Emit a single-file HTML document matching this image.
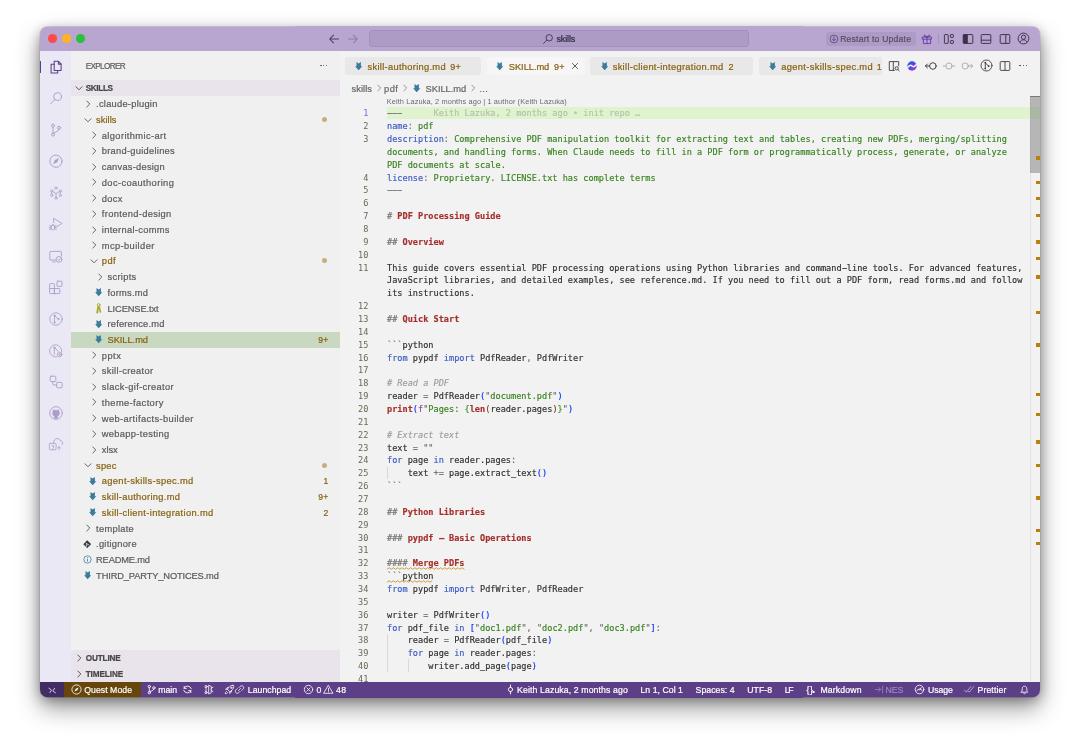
<!DOCTYPE html>
<html lang="en"><head><meta charset="utf-8"><title>SKILL.md — skills</title>
<style>
html,body{margin:0;padding:0;background:#fff;}
body{width:1080px;height:751px;position:relative;overflow:hidden;font-family:'Liberation Sans','DejaVu Sans',sans-serif;}
.b{position:absolute;display:block;}
.t{position:absolute;white-space:pre;line-height:14px;height:14px;-webkit-text-stroke:0.2px;}
#shadow{position:absolute;left:40px;top:26.5px;width:1000px;height:670.8px;border-radius:7.5px;
  box-shadow:0 11px 24px rgba(0,0,0,0.40), 0 3px 12px rgba(0,0,0,0.30), 0 0 1px rgba(0,0,0,0.5);background:#f2f2f2;}
#win{will-change:transform;position:absolute;left:0;top:0;width:1080px;height:751px;clip-path:inset(26.5px 40px 53.7px 40px round 7.5px);}
.cl{position:absolute;left:387px;white-space:pre;font-family:'DejaVu Sans Mono','Liberation Mono',monospace;font-size:8.57px;line-height:12.857px;height:12.857px;color:#2e2e2e;-webkit-text-stroke:0.15px;letter-spacing:0.011px;}
.ln{position:absolute;width:30px;left:338.4px;text-align:right;font-family:'DejaVu Sans Mono','Liberation Mono',monospace;font-size:8.57px;line-height:12.857px;height:12.857px;color:#666955;}
.k{color:#3a59c3} .s{color:#38821f} .c{color:#9c9c9c;font-style:italic} .h{color:#a52f2b;font-weight:bold}
.p{color:#6e6e6e} .b1{color:#0431fa} .b2{color:#319331} .b3{color:#7b3814} .v{color:#7a3e9d}
.hy{display:inline-block;transform:scaleX(1.9);}
.sq{text-decoration:underline wavy #bf8803;text-decoration-thickness:0.7px;text-underline-offset:1.5px;}
</style></head><body>
<div id="shadow"></div>
<div id="win">
<div class="b" style="left:40.00px;top:26.00px;width:1000.00px;height:25.20px;background:#b8a6d0;"></div>
<div class="b" style="left:40.00px;top:51.20px;width:31.40px;height:631.00px;background:#eae8f4;"></div>
<div class="b" style="left:71.40px;top:51.20px;width:268.40px;height:631.00px;background:#f0f0f0;"></div>
<div class="b" style="left:339.80px;top:51.20px;width:700.20px;height:631.00px;background:#f2f2f2;"></div>
<div class="b" style="left:40.00px;top:681.75px;width:1000.00px;height:16.00px;background:#5c3f87;"></div>
<div class="b" style="left:47.85px;top:34.25px;width:8.70px;height:8.70px;background:#fe4a4a;border-radius:50%;"></div>
<div class="b" style="left:62.15px;top:34.25px;width:8.70px;height:8.70px;background:#feb224;border-radius:50%;"></div>
<div class="b" style="left:76.45px;top:34.25px;width:8.70px;height:8.70px;background:#27c13b;border-radius:50%;"></div>
<svg class="b" style="left:328.00px;top:33.00px;" width="12" height="12" viewBox="0 0 12 12"><path d="M10.5 6H2M5.5 2.2L1.7 6l3.8 3.8" fill="none" stroke="#4a3d5c" stroke-width="1.05" stroke-linecap="round" stroke-linejoin="round"/></svg>
<svg class="b" style="left:347.00px;top:33.00px;" width="12" height="12" viewBox="0 0 12 12"><path d="M1.5 6H10M6.5 2.2L10.3 6l-3.8 3.8" fill="none" stroke="#8c7ca5" stroke-width="1.05" stroke-linecap="round" stroke-linejoin="round"/></svg>
<div class="b" style="left:368.60px;top:30.30px;width:380.00px;height:17.20px;background:#ad9bc6;border-radius:4px;box-shadow:inset 0 0 0 0.7px #9f8cba;"></div>
<svg class="b" style="left:542.00px;top:33.00px;" width="12" height="12" viewBox="0 0 12 12"><circle cx="7.2" cy="4.8" r="3.2" fill="none" stroke="#3f3550" stroke-width="0.9"/><path d="M4.9 7.1L1.6 10.4" stroke="#3f3550" stroke-width="0.9" stroke-linecap="round"/></svg>
<div class="t" style="top:31.90px;font-size:9px;color:#2e2740;letter-spacing:-0.140px;left:556.50px;">skills</div>
<div class="b" style="left:826.10px;top:32.00px;width:89.60px;height:14.00px;background:#ad9bc6;border-radius:3px;"></div>
<svg class="b" style="left:829.00px;top:33.90px;" width="10" height="10" viewBox="0 0 10 10"><circle cx="5" cy="5" r="3.9" fill="none" stroke="#5a3f85" stroke-width="0.8"/><path d="M5 2.9v3.6M3.4 5.2L5 6.8l1.6-1.6" fill="none" stroke="#5a3f85" stroke-width="0.8" stroke-linecap="round" stroke-linejoin="round"/></svg>
<div class="t" style="top:31.90px;font-size:8.6px;color:#564c66;letter-spacing:0.215px;left:840.20px;">Restart to Update</div>
<div class="b" style="left:40.00px;top:61.30px;width:1.35px;height:12.20px;background:#5c3f87;"></div>
<svg class="b" style="left:47.80px;top:59.00px;" width="16" height="16" viewBox="0 0 16 16"><g fill="none" stroke="#5c3f87" stroke-width="1.05" stroke-linecap="round" stroke-linejoin="round"><path d="M6.2 2.3h4.3l2.6 2.6v6.6h-6.9z"/><path d="M10.4 2.4v2.7h2.6"/><path d="M6.2 5.2H3.1v8.7h6.6v-2.3"/></g></svg>
<svg class="b" style="left:47.80px;top:90.43px;" width="16" height="16" viewBox="0 0 16 16"><g fill="none" stroke="#ad9dc9" stroke-width="0.95" stroke-linecap="round" stroke-linejoin="round"><circle cx="9.6" cy="6.6" r="3.9"/><path d="M6.8 9.5L2.6 13.9"/></g></svg>
<svg class="b" style="left:47.80px;top:121.86px;" width="16" height="16" viewBox="0 0 16 16"><g fill="none" stroke="#ad9dc9" stroke-width="0.95" stroke-linecap="round" stroke-linejoin="round"><circle cx="5" cy="3.6" r="1.5"/><circle cx="5" cy="12.6" r="1.5"/><circle cx="11" cy="5.8" r="1.5"/><path d="M5 5.1v6M11 7.3c0 2.4-3.2 2.2-5.6 4"/></g></svg>
<svg class="b" style="left:47.80px;top:153.29px;" width="16" height="16" viewBox="0 0 16 16"><g fill="none" stroke="#ad9dc9" stroke-width="0.95" stroke-linecap="round" stroke-linejoin="round"><circle cx="8" cy="8.2" r="6.1"/><path d="M10.6 5.6L9 9.2 5.4 10.8 7 7.2z" fill="#ad9dc9" stroke-width="0.4"/></g></svg>
<svg class="b" style="left:47.80px;top:184.72px;" width="16" height="16" viewBox="0 0 16 16"><g fill="none" stroke="#ad9dc9" stroke-width="0.8" stroke-linecap="round" stroke-linejoin="round"><circle cx="7.900" cy="3.100" r="1.150"/><circle cx="8" cy="13.100" r="1.150"/><circle cx="3.700" cy="6.100" r="1.150"/><circle cx="12.300" cy="6.100" r="1.150"/><circle cx="3.700" cy="10.400" r="1.150"/><circle cx="12.300" cy="10.400" r="1.150"/><path d="M4.700 6.700L8 8.600L11.300 6.700M8 8.600v3.300M3.700 7.300v1.900M12.300 7.300v1.900"/></g></svg>
<svg class="b" style="left:47.80px;top:216.15px;" width="16" height="16" viewBox="0 0 16 16"><g fill="none" stroke="#ad9dc9" stroke-width="0.85" stroke-linecap="round" stroke-linejoin="round"><path d="M5.600 6.400V2.300l8.500 5.100-4.700 2.900"/><ellipse cx="4.900" cy="11.500" rx="2" ry="2.500"/><path d="M1.500 9.600l1.600.900M1.500 13.600l1.600-.9M8.300 9.600l-1.600.900M8.300 13.600l-1.600-.9M1.200 11.600h1.700M6.900 11.600h1.700M3.600 9.300c.4-.9 2.200-.9 2.600 0"/></g></svg>
<svg class="b" style="left:47.80px;top:247.58px;" width="16" height="16" viewBox="0 0 16 16"><g fill="none" stroke="#ad9dc9" stroke-width="0.9" stroke-linecap="round" stroke-linejoin="round"><path d="M8 12H2.600c-.5 0-.8-.3-.8-.8V4.200c0-.5.300-.8.800-.8h10c.5 0 .8.300.8.800v4"/><path d="M4.600 13.900h2.600"/><circle cx="11" cy="11.400" r="2.900"/><path d="M9.800 11.500l.9.900 1.500-1.800"/></g></svg>
<svg class="b" style="left:47.80px;top:279.01px;" width="16" height="16" viewBox="0 0 16 16"><g fill="none" stroke="#ad9dc9" stroke-width="0.9" stroke-linecap="round" stroke-linejoin="round"><path d="M1.600 5.400c0-.5.300-.8.800-.8h3.200c.5 0 .8.300.8.800v9.200h-4c-.5 0-.8-.3-.8-.8zM1.600 9.500h9.400c.5 0 .8.300.8.800v3.500c0 .5-.3.800-.8.800H6.400M6.400 9.500v5.100"/><rect x="9" y="2.200" width="5" height="5.200" rx="0.800"/></g></svg>
<svg class="b" style="left:47.80px;top:311.34px;" width="16" height="16" viewBox="0 0 16 16"><g fill="none" stroke="#ad9dc9" stroke-width="0.85" stroke-linecap="round" stroke-linejoin="round"><circle cx="8" cy="8" r="6.200"/><circle cx="6.500" cy="4.700" r="0.700"/><circle cx="6.500" cy="11.400" r="0.700"/><circle cx="10.300" cy="8" r="0.700"/><path d="M6.500 5.400v5.300M7 5.200l2.900 2.400"/></g></svg>
<svg class="b" style="left:47.80px;top:342.77px;" width="16" height="16" viewBox="0 0 16 16"><g fill="none" stroke="#ad9dc9" stroke-width="0.85" stroke-linecap="round" stroke-linejoin="round"><path d="M13.600 9.200A6.100 6.100 0 1 0 8.600 13.900"/><circle cx="6.300" cy="4.600" r="0.700"/><path d="M6.300 5.300v6M6.800 5l3.600 3.400"/><circle cx="11.600" cy="11.600" r="2.300"/><circle cx="11.600" cy="11.600" r="0.800"/></g></svg>
<svg class="b" style="left:47.80px;top:374.00px;" width="16" height="16" viewBox="0 0 16 16"><g fill="none" stroke="#ad9dc9" stroke-width="0.9" stroke-linecap="round" stroke-linejoin="round"><rect x="2.200" y="2.200" width="5.600" height="5.400" rx="0.900"/><rect x="8.600" y="8.400" width="5.600" height="5.400" rx="0.900"/><path d="M4.700 7.600v2c0 .9.500 1.400 1.400 1.400h2.500"/></g></svg>
<svg class="b" style="left:47.80px;top:405.13px;" width="16" height="16" viewBox="0 0 16 16"><g fill="none" stroke="#ad9dc9" stroke-width="0.9" stroke-linecap="round" stroke-linejoin="round"><circle cx="8" cy="8" r="6.300"/><path d="M6.400 13.200v-2.100c-.9-.3-1.900-1.300-1.900-2.800 0-.7.200-1.300.6-1.800-.1-.5-.1-1.100.1-1.700.7 0 1.300.3 1.800.7.600-.2 1.400-.2 2 0 .5-.4 1.100-.7 1.800-.7.200.6.200 1.200.1 1.700.4.500.6 1.100.6 1.800 0 1.500-1 2.500-1.900 2.800v2.100z" fill="#ad9dc9" stroke-width="0.5"/></g></svg>
<svg class="b" style="left:47.80px;top:436.16px;" width="16" height="16" viewBox="0 0 16 16"><g fill="none" stroke="#ad9dc9" stroke-width="0.85" stroke-linecap="round" stroke-linejoin="round"><path d="M5.600 7.100c-.3-2.600 1.300-4.500 3.600-4.500 1.600 0 2.800.9 3.300 2.300 1.300.1 2.200 1 2.200 2.200 0 .8-.4 1.400-1 1.800"/><rect x="1.300" y="7.300" width="6.800" height="6.500" rx="1.100"/><path d="M4.200 9.600h1.300v1.900c0 .5-.3.800-.8.800M11 13.600v-2.800M9.700 12l1.300-1.300 1.300 1.300"/></g></svg>
<div class="t" style="top:60.00px;font-size:8.2px;color:#5f5f5f;letter-spacing:-0.656px;left:85.70px;">EXPLORER</div>
<div class="b" style="left:320.30px;top:65.20px;width:1.30px;height:1.30px;background:#555;border-radius:50%;"></div>
<div class="b" style="left:323.20px;top:65.20px;width:1.30px;height:1.30px;background:#555;border-radius:50%;"></div>
<div class="b" style="left:326.10px;top:65.20px;width:1.30px;height:1.30px;background:#555;border-radius:50%;"></div>
<div class="b" style="left:71.40px;top:80.20px;width:268.40px;height:15.50px;background:#e9e4ec;"></div>
<svg class="b" style="left:73.60px;top:83.20px;" width="10" height="10" viewBox="0 0 10 10"><path d="M2.0 3.8L5 6.8L8.0 3.8" fill="none" stroke="#444" stroke-width="0.9" stroke-linecap="round" stroke-linejoin="round"/></svg>
<div class="t" style="top:82.00px;font-size:8.2px;color:#474747;font-weight:bold;letter-spacing:-0.365px;left:85.70px;">SKILLS</div>
<svg class="b" style="left:83.30px;top:98.86px;" width="10" height="10" viewBox="0 0 10 10"><path d="M3.8 2.0L6.8 5L3.8 8.0" fill="none" stroke="#555" stroke-width="0.9" stroke-linecap="round" stroke-linejoin="round"/></svg>
<div class="t" style="top:97.31px;font-size:9.3px;color:#5a5a5a;letter-spacing:0.255px;left:96.10px;">.claude-plugin</div>
<svg class="b" style="left:83.30px;top:114.57px;" width="10" height="10" viewBox="0 0 10 10"><path d="M2.0 3.8L5 6.8L8.0 3.8" fill="none" stroke="#555" stroke-width="0.9" stroke-linecap="round" stroke-linejoin="round"/></svg>
<div class="t" style="top:113.02px;font-size:9.3px;color:#87610f;letter-spacing:0.049px;left:96.10px;">skills</div>
<div class="b" style="left:322.30px;top:116.97px;width:5.00px;height:5.00px;background:#c6ad7f;border-radius:50%;"></div>
<svg class="b" style="left:89.01px;top:130.29px;" width="10" height="10" viewBox="0 0 10 10"><path d="M3.8 2.0L6.8 5L3.8 8.0" fill="none" stroke="#555" stroke-width="0.9" stroke-linecap="round" stroke-linejoin="round"/></svg>
<div class="t" style="top:128.74px;font-size:9.3px;color:#5a5a5a;letter-spacing:0.385px;left:101.81px;">algorithmic-art</div>
<svg class="b" style="left:89.01px;top:146.00px;" width="10" height="10" viewBox="0 0 10 10"><path d="M3.8 2.0L6.8 5L3.8 8.0" fill="none" stroke="#555" stroke-width="0.9" stroke-linecap="round" stroke-linejoin="round"/></svg>
<div class="t" style="top:144.45px;font-size:9.3px;color:#5a5a5a;letter-spacing:0.277px;left:101.81px;">brand-guidelines</div>
<svg class="b" style="left:89.01px;top:161.71px;" width="10" height="10" viewBox="0 0 10 10"><path d="M3.8 2.0L6.8 5L3.8 8.0" fill="none" stroke="#555" stroke-width="0.9" stroke-linecap="round" stroke-linejoin="round"/></svg>
<div class="t" style="top:160.16px;font-size:9.3px;color:#5a5a5a;letter-spacing:0.246px;left:101.81px;">canvas-design</div>
<svg class="b" style="left:89.01px;top:177.43px;" width="10" height="10" viewBox="0 0 10 10"><path d="M3.8 2.0L6.8 5L3.8 8.0" fill="none" stroke="#555" stroke-width="0.9" stroke-linecap="round" stroke-linejoin="round"/></svg>
<div class="t" style="top:175.88px;font-size:9.3px;color:#5a5a5a;letter-spacing:0.381px;left:101.81px;">doc-coauthoring</div>
<svg class="b" style="left:89.01px;top:193.14px;" width="10" height="10" viewBox="0 0 10 10"><path d="M3.8 2.0L6.8 5L3.8 8.0" fill="none" stroke="#555" stroke-width="0.9" stroke-linecap="round" stroke-linejoin="round"/></svg>
<div class="t" style="top:191.59px;font-size:9.3px;color:#5a5a5a;letter-spacing:0.353px;left:101.81px;">docx</div>
<svg class="b" style="left:89.01px;top:208.86px;" width="10" height="10" viewBox="0 0 10 10"><path d="M3.8 2.0L6.8 5L3.8 8.0" fill="none" stroke="#555" stroke-width="0.9" stroke-linecap="round" stroke-linejoin="round"/></svg>
<div class="t" style="top:207.31px;font-size:9.3px;color:#5a5a5a;letter-spacing:0.349px;left:101.81px;">frontend-design</div>
<svg class="b" style="left:89.01px;top:224.57px;" width="10" height="10" viewBox="0 0 10 10"><path d="M3.8 2.0L6.8 5L3.8 8.0" fill="none" stroke="#555" stroke-width="0.9" stroke-linecap="round" stroke-linejoin="round"/></svg>
<div class="t" style="top:223.02px;font-size:9.3px;color:#5a5a5a;letter-spacing:0.319px;left:101.81px;">internal-comms</div>
<svg class="b" style="left:89.01px;top:240.28px;" width="10" height="10" viewBox="0 0 10 10"><path d="M3.8 2.0L6.8 5L3.8 8.0" fill="none" stroke="#555" stroke-width="0.9" stroke-linecap="round" stroke-linejoin="round"/></svg>
<div class="t" style="top:238.73px;font-size:9.3px;color:#5a5a5a;letter-spacing:0.392px;left:101.81px;">mcp-builder</div>
<svg class="b" style="left:89.01px;top:256.00px;" width="10" height="10" viewBox="0 0 10 10"><path d="M2.0 3.8L5 6.8L8.0 3.8" fill="none" stroke="#555" stroke-width="0.9" stroke-linecap="round" stroke-linejoin="round"/></svg>
<div class="t" style="top:254.45px;font-size:9.3px;color:#87610f;letter-spacing:0.431px;left:101.81px;">pdf</div>
<div class="b" style="left:322.30px;top:258.40px;width:5.00px;height:5.00px;background:#c6ad7f;border-radius:50%;"></div>
<svg class="b" style="left:94.73px;top:271.71px;" width="10" height="10" viewBox="0 0 10 10"><path d="M3.8 2.0L6.8 5L3.8 8.0" fill="none" stroke="#555" stroke-width="0.9" stroke-linecap="round" stroke-linejoin="round"/></svg>
<div class="t" style="top:270.16px;font-size:9.3px;color:#5a5a5a;letter-spacing:0.304px;left:107.53px;">scripts</div>
<svg class="b" style="left:95.03px;top:288.13px;" width="7.6" height="8.6" viewBox="0 0 7.6 8.6"><path d="M1.500 0.100L3.700 1.400 5.900 0.100V4.200H7.300L3.700 8.300 0.100 4.200H1.500z" fill="#3b7b9d"/></svg>
<div class="t" style="top:285.88px;font-size:9.3px;color:#5a5a5a;letter-spacing:0.250px;left:107.53px;">forms.md</div>
<svg class="b" style="left:95.03px;top:302.84px;" width="7.6" height="10.8" viewBox="0 0 7.6 10.8"><g fill="none" stroke="#a8a72a" stroke-linecap="round"><circle cx="3.700" cy="1.900" r="1.350" stroke-width="0.9"/><path d="M3.200 3.900L2.300 9.600" stroke-width="1.900"/><path d="M4.300 4L5.500 9" stroke-width="1.500"/></g></svg>
<div class="t" style="top:301.59px;font-size:9.3px;color:#5a5a5a;letter-spacing:-0.119px;left:107.53px;">LICENSE.txt</div>
<svg class="b" style="left:95.03px;top:319.55px;" width="7.6" height="8.6" viewBox="0 0 7.6 8.6"><path d="M1.500 0.100L3.700 1.400 5.900 0.100V4.200H7.300L3.700 8.300 0.100 4.200H1.500z" fill="#3b7b9d"/></svg>
<div class="t" style="top:317.30px;font-size:9.3px;color:#5a5a5a;letter-spacing:0.184px;left:107.53px;">reference.md</div>
<div class="b" style="left:71.40px;top:332.01px;width:268.40px;height:15.71px;background:#c9d8c1;"></div>
<svg class="b" style="left:95.03px;top:335.27px;" width="7.6" height="8.6" viewBox="0 0 7.6 8.6"><path d="M1.500 0.100L3.700 1.400 5.900 0.100V4.200H7.300L3.700 8.300 0.100 4.200H1.500z" fill="#3b7b9d"/></svg>
<div class="t" style="top:333.02px;font-size:9.3px;color:#87610f;letter-spacing:-0.047px;left:107.53px;">SKILL.md</div>
<div class="t" style="top:333.07px;font-size:8.6px;color:#87610f;letter-spacing:0.200px;right:751.60px;">9+</div>
<svg class="b" style="left:89.01px;top:350.28px;" width="10" height="10" viewBox="0 0 10 10"><path d="M3.8 2.0L6.8 5L3.8 8.0" fill="none" stroke="#555" stroke-width="0.9" stroke-linecap="round" stroke-linejoin="round"/></svg>
<div class="t" style="top:348.73px;font-size:9.3px;color:#5a5a5a;letter-spacing:0.474px;left:101.81px;">pptx</div>
<svg class="b" style="left:89.01px;top:366.00px;" width="10" height="10" viewBox="0 0 10 10"><path d="M3.8 2.0L6.8 5L3.8 8.0" fill="none" stroke="#555" stroke-width="0.9" stroke-linecap="round" stroke-linejoin="round"/></svg>
<div class="t" style="top:364.45px;font-size:9.3px;color:#5a5a5a;letter-spacing:0.306px;left:101.81px;">skill-creator</div>
<svg class="b" style="left:89.01px;top:381.71px;" width="10" height="10" viewBox="0 0 10 10"><path d="M3.8 2.0L6.8 5L3.8 8.0" fill="none" stroke="#555" stroke-width="0.9" stroke-linecap="round" stroke-linejoin="round"/></svg>
<div class="t" style="top:380.16px;font-size:9.3px;color:#5a5a5a;letter-spacing:0.354px;left:101.81px;">slack-gif-creator</div>
<svg class="b" style="left:89.01px;top:397.42px;" width="10" height="10" viewBox="0 0 10 10"><path d="M3.8 2.0L6.8 5L3.8 8.0" fill="none" stroke="#555" stroke-width="0.9" stroke-linecap="round" stroke-linejoin="round"/></svg>
<div class="t" style="top:395.87px;font-size:9.3px;color:#5a5a5a;letter-spacing:0.388px;left:101.81px;">theme-factory</div>
<svg class="b" style="left:89.01px;top:413.14px;" width="10" height="10" viewBox="0 0 10 10"><path d="M3.8 2.0L6.8 5L3.8 8.0" fill="none" stroke="#555" stroke-width="0.9" stroke-linecap="round" stroke-linejoin="round"/></svg>
<div class="t" style="top:411.59px;font-size:9.3px;color:#5a5a5a;letter-spacing:0.389px;left:101.81px;">web-artifacts-builder</div>
<svg class="b" style="left:89.01px;top:428.85px;" width="10" height="10" viewBox="0 0 10 10"><path d="M3.8 2.0L6.8 5L3.8 8.0" fill="none" stroke="#555" stroke-width="0.9" stroke-linecap="round" stroke-linejoin="round"/></svg>
<div class="t" style="top:427.30px;font-size:9.3px;color:#5a5a5a;letter-spacing:0.334px;left:101.81px;">webapp-testing</div>
<svg class="b" style="left:89.01px;top:444.57px;" width="10" height="10" viewBox="0 0 10 10"><path d="M3.8 2.0L6.8 5L3.8 8.0" fill="none" stroke="#555" stroke-width="0.9" stroke-linecap="round" stroke-linejoin="round"/></svg>
<div class="t" style="top:443.02px;font-size:9.3px;color:#5a5a5a;letter-spacing:-0.039px;left:101.81px;">xlsx</div>
<svg class="b" style="left:83.30px;top:460.28px;" width="10" height="10" viewBox="0 0 10 10"><path d="M2.0 3.8L5 6.8L8.0 3.8" fill="none" stroke="#555" stroke-width="0.9" stroke-linecap="round" stroke-linejoin="round"/></svg>
<div class="t" style="top:458.73px;font-size:9.3px;color:#87610f;letter-spacing:0.220px;left:96.10px;">spec</div>
<div class="b" style="left:322.30px;top:462.68px;width:5.00px;height:5.00px;background:#c6ad7f;border-radius:50%;"></div>
<svg class="b" style="left:89.31px;top:476.69px;" width="7.6" height="8.6" viewBox="0 0 7.6 8.6"><path d="M1.500 0.100L3.700 1.400 5.900 0.100V4.200H7.300L3.700 8.300 0.100 4.200H1.500z" fill="#3b7b9d"/></svg>
<div class="t" style="top:474.44px;font-size:9.3px;color:#87610f;letter-spacing:0.351px;left:101.81px;">agent-skills-spec.md</div>
<div class="t" style="top:474.49px;font-size:8.6px;color:#87610f;letter-spacing:0.200px;right:751.60px;">1</div>
<svg class="b" style="left:89.31px;top:492.41px;" width="7.6" height="8.6" viewBox="0 0 7.6 8.6"><path d="M1.500 0.100L3.700 1.400 5.900 0.100V4.200H7.300L3.700 8.300 0.100 4.200H1.500z" fill="#3b7b9d"/></svg>
<div class="t" style="top:490.16px;font-size:9.3px;color:#87610f;letter-spacing:0.308px;left:101.81px;">skill-authoring.md</div>
<div class="t" style="top:490.21px;font-size:8.6px;color:#87610f;letter-spacing:0.200px;right:751.60px;">9+</div>
<svg class="b" style="left:89.31px;top:508.12px;" width="7.6" height="8.6" viewBox="0 0 7.6 8.6"><path d="M1.500 0.100L3.700 1.400 5.900 0.100V4.200H7.300L3.700 8.300 0.100 4.200H1.500z" fill="#3b7b9d"/></svg>
<div class="t" style="top:505.87px;font-size:9.3px;color:#87610f;letter-spacing:0.350px;left:101.81px;">skill-client-integration.md</div>
<div class="t" style="top:505.92px;font-size:8.6px;color:#87610f;letter-spacing:0.200px;right:751.60px;">2</div>
<svg class="b" style="left:83.30px;top:523.13px;" width="10" height="10" viewBox="0 0 10 10"><path d="M3.8 2.0L6.8 5L3.8 8.0" fill="none" stroke="#555" stroke-width="0.9" stroke-linecap="round" stroke-linejoin="round"/></svg>
<div class="t" style="top:521.59px;font-size:9.3px;color:#5a5a5a;letter-spacing:0.290px;left:96.10px;">template</div>
<svg class="b" style="left:82.90px;top:539.65px;" width="8.4" height="8.4" viewBox="0 0 8.4 8.4"><path d="M4.200 0.300L8.100 4.200 4.200 8.100 0.300 4.200z" fill="#2c3a42"/><path d="M3.200 2.800L5 4.600M3.400 3v3M5 4.600" stroke="#f0f0f0" stroke-width="0.7" fill="none"/><circle cx="5.100" cy="4.700" r="0.600" fill="#f0f0f0"/><circle cx="3.400" cy="6" r="0.600" fill="#f0f0f0"/></svg>
<div class="t" style="top:537.30px;font-size:9.3px;color:#5a5a5a;letter-spacing:0.250px;left:96.10px;">.gitignore</div>
<svg class="b" style="left:82.60px;top:555.06px;" width="9" height="9" viewBox="0 0 9 9"><circle cx="4.500" cy="4.500" r="3.700" fill="none" stroke="#3f84a8" stroke-width="0.8"/><path d="M4.500 4v2.600" stroke="#3f84a8" stroke-width="0.9"/><circle cx="4.500" cy="2.700" r="0.550" fill="#3f84a8"/></svg>
<div class="t" style="top:553.01px;font-size:9.3px;color:#5a5a5a;letter-spacing:-0.185px;left:96.10px;">README.md</div>
<svg class="b" style="left:83.60px;top:570.98px;" width="7.6" height="8.6" viewBox="0 0 7.6 8.6"><path d="M1.500 0.100L3.700 1.400 5.900 0.100V4.200H7.300L3.700 8.300 0.100 4.200H1.500z" fill="#3b7b9d"/></svg>
<div class="t" style="top:568.73px;font-size:9.3px;color:#5a5a5a;letter-spacing:-0.138px;left:96.10px;">THIRD_PARTY_NOTICES.md</div>
<div class="b" style="left:71.40px;top:649.80px;width:268.40px;height:32.00px;background:#e9e4ec;"></div>
<svg class="b" style="left:73.80px;top:653.30px;" width="10" height="10" viewBox="0 0 10 10"><path d="M3.8 2.0L6.8 5L3.8 8.0" fill="none" stroke="#444" stroke-width="0.9" stroke-linecap="round" stroke-linejoin="round"/></svg>
<div class="t" style="top:651.90px;font-size:8.2px;color:#474747;font-weight:bold;letter-spacing:-0.140px;left:85.70px;">OUTLINE</div>
<svg class="b" style="left:73.80px;top:668.90px;" width="10" height="10" viewBox="0 0 10 10"><path d="M3.8 2.0L6.8 5L3.8 8.0" fill="none" stroke="#444" stroke-width="0.9" stroke-linecap="round" stroke-linejoin="round"/></svg>
<div class="t" style="top:667.50px;font-size:8.2px;color:#474747;font-weight:bold;letter-spacing:-0.103px;left:85.70px;">TIMELINE</div>
<div class="b" style="left:344.80px;top:56.80px;width:136.00px;height:18.10px;background:#e8e8e8;border-radius:3px;"></div>
<svg class="b" style="left:355.00px;top:61.90px;" width="7.6" height="8.6" viewBox="0 0 7.6 8.6"><path d="M1.500 0.100L3.700 1.400 5.900 0.100V4.200H7.300L3.700 8.300 0.100 4.200H1.500z" fill="#3b7b9d"/></svg>
<div class="t" style="top:59.60px;font-size:9.3px;color:#87610f;letter-spacing:0.308px;left:367.50px;">skill-authoring.md</div>
<div class="t" style="top:59.60px;font-size:9.0px;color:#87610f;letter-spacing:0.250px;left:450.20px;">9+</div>
<div class="b" style="left:486.50px;top:56.80px;width:98.50px;height:18.10px;background:#f6f6f6;border-radius:3px;"></div>
<svg class="b" style="left:496.20px;top:61.90px;" width="7.6" height="8.6" viewBox="0 0 7.6 8.6"><path d="M1.500 0.100L3.700 1.400 5.900 0.100V4.200H7.300L3.700 8.300 0.100 4.200H1.500z" fill="#3b7b9d"/></svg>
<div class="t" style="top:59.60px;font-size:9.3px;color:#87610f;letter-spacing:-0.047px;left:508.80px;">SKILL.md</div>
<div class="t" style="top:59.60px;font-size:9.0px;color:#87610f;letter-spacing:0.250px;left:553.90px;">9+</div>
<svg class="b" style="left:570.60px;top:62.30px;" width="8" height="8" viewBox="0 0 8 8"><path d="M1.400 1.400L6.600 6.600M6.600 1.400L1.400 6.600" stroke="#444" stroke-width="0.85" stroke-linecap="round"/></svg>
<div class="b" style="left:590.40px;top:56.80px;width:162.50px;height:18.10px;background:#e8e8e8;border-radius:3px;"></div>
<svg class="b" style="left:600.60px;top:61.90px;" width="7.6" height="8.6" viewBox="0 0 7.6 8.6"><path d="M1.500 0.100L3.700 1.400 5.900 0.100V4.200H7.300L3.700 8.300 0.100 4.200H1.500z" fill="#3b7b9d"/></svg>
<div class="t" style="top:59.60px;font-size:9.3px;color:#87610f;letter-spacing:0.315px;left:612.70px;">skill-client-integration.md</div>
<div class="t" style="top:59.60px;font-size:9.0px;color:#87610f;letter-spacing:0.250px;left:728.40px;">2</div>
<div class="b" style="left:758.90px;top:56.80px;width:127.10px;height:18.10px;background:#e8e8e8;border-radius:3px;"></div>
<svg class="b" style="left:769.20px;top:61.90px;" width="7.6" height="8.6" viewBox="0 0 7.6 8.6"><path d="M1.500 0.100L3.700 1.400 5.900 0.100V4.200H7.300L3.700 8.300 0.100 4.200H1.500z" fill="#3b7b9d"/></svg>
<div class="t" style="top:59.60px;font-size:9.3px;color:#87610f;letter-spacing:0.346px;left:781.30px;">agent-skills-spec.md</div>
<div class="t" style="top:59.60px;font-size:9.0px;color:#87610f;letter-spacing:0.250px;left:876.80px;">1</div>
<div class="b" style="left:882.40px;top:56.50px;width:4.00px;height:19.00px;background:#f2f2f2;"></div>
<svg class="b" style="left:888.00px;top:59.60px;" width="12" height="12" viewBox="0 0 12 12"><g fill="none" stroke="#3c3c3c" stroke-width="0.9" stroke-linejoin="round"><path d="M6.800 10.400H1.300V1.600h9.400v4.600"/><path d="M5.300 1.600v8.800"/><circle cx="8.700" cy="8.300" r="1.600"/><path d="M9.900 9.500l1.300 1.300" stroke-linecap="round"/></g></svg>
<svg class="b" style="left:905.70px;top:59.60px;" width="12" height="12" viewBox="0 0 12 12"><defs><linearGradient id="sw" x1="0" y1="0" x2="1" y2="1"><stop offset="0.35" stop-color="#3a50de"/><stop offset="0.75" stop-color="#9040d8"/></linearGradient></defs><circle cx="6" cy="6" r="4.700" fill="url(#sw)"/><path d="M1.800 7.300c1.500-2.300 2.900-2.300 4.200-1.300s2.700 1 4.200-1.300" fill="none" stroke="#f4f4fb" stroke-width="1.500" stroke-linecap="round"/></svg>
<svg class="b" style="left:923.50px;top:59.60px;" width="14" height="12" viewBox="0 0 14 12"><g fill="none" stroke="#3c3c3c" stroke-width="0.95" stroke-linecap="round" stroke-linejoin="round"><circle cx="8.900" cy="6" r="3.300"/><path d="M5.600 6H1.500M3.400 4L1.400 6l2 2"/></g></svg>
<svg class="b" style="left:942.30px;top:59.60px;" width="14" height="12" viewBox="0 0 14 12"><g fill="none" stroke="#a9a9a9" stroke-width="0.9" stroke-linecap="round"><circle cx="7" cy="6" r="3.100"/><path d="M3.900 6H1.200M10.100 6h2.700"/></g></svg>
<svg class="b" style="left:960.30px;top:59.60px;" width="14" height="12" viewBox="0 0 14 12"><g fill="none" stroke="#a9a9a9" stroke-width="0.9" stroke-linecap="round" stroke-linejoin="round"><circle cx="5.200" cy="6" r="3.100"/><path d="M8.300 6h4.300M10.700 4l2 2-2 2"/></g></svg>
<svg class="b" style="left:979.60px;top:59.10px;" width="13" height="13" viewBox="0 0 13 13"><g fill="none" stroke="#3c3c3c" stroke-width="0.9" stroke-linecap="round"><circle cx="6.500" cy="6.500" r="5.500"/><path d="M5.300 3.800v5.600M5.600 4.200l3 2.800"/></g><circle cx="5.300" cy="3.600" r="0.900" fill="#3c3c3c"/><circle cx="5.300" cy="9.600" r="0.900" fill="#3c3c3c"/><circle cx="8.700" cy="7.200" r="0.900" fill="#3c3c3c"/></svg>
<svg class="b" style="left:999.00px;top:59.60px;" width="12" height="12" viewBox="0 0 12 12"><g fill="none" stroke="#3c3c3c" stroke-width="0.9" stroke-linejoin="round"><rect x="1.200" y="1.600" width="9.600" height="8.800" rx="0.800"/><path d="M6 1.600v8.800"/></g></svg>
<div class="b" style="left:1019.25px;top:64.95px;width:1.30px;height:1.30px;background:#3c3c3c;border-radius:50%;"></div>
<div class="b" style="left:1022.55px;top:64.95px;width:1.30px;height:1.30px;background:#3c3c3c;border-radius:50%;"></div>
<div class="b" style="left:1025.85px;top:64.95px;width:1.30px;height:1.30px;background:#3c3c3c;border-radius:50%;"></div>
<div class="t" style="top:81.70px;font-size:9.3px;color:#666;letter-spacing:0.069px;left:351.50px;">skills</div>
<svg class="b" style="left:374.00px;top:83.10px;" width="10" height="10" viewBox="0 0 10 10"><path d="M3.9 2.2L6.7 5L3.9 7.8" fill="none" stroke="#777" stroke-width="0.8" stroke-linecap="round" stroke-linejoin="round"/></svg>
<div class="t" style="top:81.70px;font-size:9.3px;color:#666;letter-spacing:0.431px;left:384.10px;">pdf</div>
<svg class="b" style="left:400.20px;top:83.10px;" width="10" height="10" viewBox="0 0 10 10"><path d="M3.9 2.2L6.7 5L3.9 7.8" fill="none" stroke="#777" stroke-width="0.8" stroke-linecap="round" stroke-linejoin="round"/></svg>
<svg class="b" style="left:413.00px;top:83.90px;" width="7.6" height="8.6" viewBox="0 0 7.6 8.6"><path d="M1.500 0.100L3.700 1.400 5.900 0.100V4.200H7.300L3.700 8.300 0.100 4.200H1.500z" fill="#3b7b9d"/></svg>
<div class="t" style="top:81.70px;font-size:9.3px;color:#666;letter-spacing:-0.047px;left:425.60px;">SKILL.md</div>
<svg class="b" style="left:468.30px;top:83.10px;" width="10" height="10" viewBox="0 0 10 10"><path d="M3.9 2.2L6.7 5L3.9 7.8" fill="none" stroke="#777" stroke-width="0.8" stroke-linecap="round" stroke-linejoin="round"/></svg>
<div class="t" style="top:81.70px;font-size:9.3px;color:#666;left:479.00px;">…</div>
<div class="t" style="top:94.80px;font-size:7.4px;color:#6a6a6a;letter-spacing:0.108px;left:386.70px;-webkit-text-stroke:0;">Keith Lazuka, 2 months ago | 1 author (Keith Lazuka)</div>
<div class="b" style="left:387.00px;top:106.60px;width:653.00px;height:12.86px;background:#dff3cf;"></div>
<div class="ln" style="top:107.35px;color:#8f5fd7;">1</div>
<div class="cl" style="top:107.35px"><span class="p"><span class="hy">-</span><span class="hy">-</span><span class="hy">-</span></span><span style="color:#b4c2a8">      Keith Lazuka, 2 months ago • init repo …</span></div>
<div class="ln" style="top:120.21px;">2</div>
<div class="cl" style="top:120.21px"><span class="k">name</span><span class="p">:</span> <span class="s">pdf</span></div>
<div class="ln" style="top:133.06px;">3</div>
<div class="cl" style="top:133.06px"><span class="k">description</span><span class="p">:</span> <span class="s">Comprehensive PDF manipulation toolkit for extracting text and tables, creating new PDFs, merging/splitting</span></div>
<div class="cl" style="top:145.92px"><span class="s">documents, and handling forms. When Claude needs to fill in a PDF form or programmatically process, generate, or analyze</span></div>
<div class="cl" style="top:158.78px"><span class="s">PDF documents at scale.</span></div>
<div class="ln" style="top:171.63px;">4</div>
<div class="cl" style="top:171.63px"><span class="k">license</span><span class="p">:</span> <span class="s">Proprietary. LICENSE.txt has complete terms</span></div>
<div class="ln" style="top:184.49px;">5</div>
<div class="cl" style="top:184.49px"><span class="p"><span class="hy">-</span><span class="hy">-</span><span class="hy">-</span></span></div>
<div class="ln" style="top:197.35px;">6</div>
<div class="ln" style="top:210.21px;">7</div>
<div class="cl" style="top:210.21px"><span class="p">#</span> <span class="h">PDF Processing Guide</span></div>
<div class="ln" style="top:223.06px;">8</div>
<div class="ln" style="top:235.92px;">9</div>
<div class="cl" style="top:235.92px"><span class="p">##</span> <span class="h">Overview</span></div>
<div class="ln" style="top:248.78px;">10</div>
<div class="ln" style="top:261.63px;">11</div>
<div class="cl" style="top:261.63px">This guide covers essential PDF processing operations using Python libraries and command<span class="hy">-</span>line tools. For advanced features,</div>
<div class="cl" style="top:274.49px">JavaScript libraries, and detailed examples, see reference.md. If you need to fill out a PDF form, read forms.md and follow</div>
<div class="cl" style="top:287.35px">its instructions.</div>
<div class="ln" style="top:300.20px;">12</div>
<div class="ln" style="top:313.06px;">13</div>
<div class="cl" style="top:313.06px"><span class="p">##</span> <span class="h">Quick Start</span></div>
<div class="ln" style="top:325.92px;">14</div>
<div class="ln" style="top:338.78px;">15</div>
<div class="cl" style="top:338.78px"><span class="p">```</span>python</div>
<div class="ln" style="top:351.63px;">16</div>
<div class="cl" style="top:351.63px"><span class="k">from</span> pypdf <span class="k">import</span> PdfReader<span class="p">,</span> PdfWriter</div>
<div class="ln" style="top:364.49px;">17</div>
<div class="ln" style="top:377.35px;">18</div>
<div class="cl" style="top:377.35px"><span class="c"># Read a PDF</span></div>
<div class="ln" style="top:390.20px;">19</div>
<div class="cl" style="top:390.20px">reader <span class="p">=</span> PdfReader<span class="b1">(</span><span class="p">&quot;</span><span class="s">document.pdf</span><span class="p">&quot;</span><span class="b1">)</span></div>
<div class="ln" style="top:403.06px;">20</div>
<div class="cl" style="top:403.06px"><span class="h">print</span><span class="b1">(</span><span class="v">f</span><span class="p">&quot;</span><span class="s">Pages: </span><span class="b2">{</span><span class="h">len</span><span class="b3">(</span>reader.pages<span class="b3">)</span><span class="b2">}</span><span class="p">&quot;</span><span class="b1">)</span></div>
<div class="ln" style="top:415.92px;">21</div>
<div class="ln" style="top:428.77px;">22</div>
<div class="cl" style="top:428.77px"><span class="c"># Extract text</span></div>
<div class="ln" style="top:441.63px;">23</div>
<div class="cl" style="top:441.63px">text <span class="p">=</span> <span class="p">&quot;&quot;</span></div>
<div class="ln" style="top:454.49px;">24</div>
<div class="cl" style="top:454.49px"><span class="k">for</span> page <span class="k">in</span> reader.pages<span class="p">:</span></div>
<div class="ln" style="top:467.35px;">25</div>
<div class="cl" style="top:467.35px">    text <span class="p">+=</span> page.extract_text<span class="b1">()</span></div>
<div class="ln" style="top:480.20px;">26</div>
<div class="cl" style="top:480.20px"><span class="p">```</span></div>
<div class="ln" style="top:493.06px;">27</div>
<div class="ln" style="top:505.92px;">28</div>
<div class="cl" style="top:505.92px"><span class="p">##</span> <span class="h">Python Libraries</span></div>
<div class="ln" style="top:518.77px;">29</div>
<div class="ln" style="top:531.63px;">30</div>
<div class="cl" style="top:531.63px"><span class="p">###</span> <span class="h">pypdf </span><span class="h"><span class="hy">-</span></span><span class="h"> Basic Operations</span></div>
<div class="ln" style="top:544.49px;">31</div>
<div class="ln" style="top:557.35px;">32</div>
<div class="cl" style="top:557.35px"><span class="p">####</span> <span class="h">Merge PDFs</span></div>
<div class="ln" style="top:570.20px;">33</div>
<div class="cl" style="top:570.20px"><span class="p">```</span>python</div>
<div class="ln" style="top:583.06px;">34</div>
<div class="cl" style="top:583.06px"><span class="k">from</span> pypdf <span class="k">import</span> PdfWriter<span class="p">,</span> PdfReader</div>
<div class="ln" style="top:595.92px;">35</div>
<div class="ln" style="top:608.77px;">36</div>
<div class="cl" style="top:608.77px">writer <span class="p">=</span> PdfWriter<span class="b1">()</span></div>
<div class="ln" style="top:621.63px;">37</div>
<div class="cl" style="top:621.63px"><span class="k">for</span> pdf_file <span class="k">in</span> <span class="b1">[</span><span class="p">&quot;</span><span class="s">doc1.pdf</span><span class="p">&quot;</span><span class="p">,</span> <span class="p">&quot;</span><span class="s">doc2.pdf</span><span class="p">&quot;</span><span class="p">,</span> <span class="p">&quot;</span><span class="s">doc3.pdf</span><span class="p">&quot;</span><span class="b1">]</span><span class="p">:</span></div>
<div class="ln" style="top:634.49px;">38</div>
<div class="cl" style="top:634.49px">    reader <span class="p">=</span> PdfReader<span class="b1">(</span>pdf_file<span class="b1">)</span></div>
<div class="ln" style="top:647.34px;">39</div>
<div class="cl" style="top:647.34px">    <span class="k">for</span> page <span class="k">in</span> reader.pages<span class="p">:</span></div>
<div class="ln" style="top:660.20px;">40</div>
<div class="cl" style="top:660.20px">        writer.add_page<span class="b1">(</span>page<span class="b1">)</span></div>
<div class="ln" style="top:673.06px;">41</div>
<div class="b" style="left:387.30px;top:466.60px;width:0.75px;height:12.86px;background:#d9d9d9;"></div>
<div class="b" style="left:387.30px;top:633.74px;width:0.75px;height:38.57px;background:#d9d9d9;"></div>
<div class="b" style="left:407.94px;top:659.45px;width:0.75px;height:12.86px;background:#d9d9d9;"></div>
<svg class="b" style="left:386.90px;top:567.40px;" width="77.7" height="3" viewBox="0 0 77.7 3"><path d="M0.00 2.25L2.14 0.75L4.29 2.25L6.43 0.75L8.57 2.25L10.71 0.75L12.86 2.25L15.00 0.75L17.14 2.25L19.29 0.75L21.43 2.25L23.57 0.75L25.72 2.25L27.86 0.75L30.00 2.25L32.15 0.75L34.29 2.25L36.43 0.75L38.57 2.25L40.72 0.75L42.86 2.25L45.00 0.75L47.15 2.25L49.29 0.75L51.43 2.25L53.58 0.75L55.72 2.25L57.86 0.75L60.00 2.25L62.15 0.75L64.29 2.25L66.43 0.75L68.58 2.25L70.72 0.75L72.86 2.25L75.01 0.75L77.15 2.25" fill="none" stroke="#c08a12" stroke-width="0.8" stroke-linejoin="round" stroke-linecap="round"/></svg>
<svg class="b" style="left:386.90px;top:580.26px;" width="46.8" height="3" viewBox="0 0 46.8 3"><path d="M0.00 2.25L2.14 0.75L4.29 2.25L6.43 0.75L8.57 2.25L10.71 0.75L12.86 2.25L15.00 0.75L17.14 2.25L19.29 0.75L21.43 2.25L23.57 0.75L25.72 2.25L27.86 0.75L30.00 2.25L32.15 0.75L34.29 2.25L36.43 0.75L38.57 2.25L40.72 0.75L42.86 2.25L45.00 0.75" fill="none" stroke="#c08a12" stroke-width="0.8" stroke-linejoin="round" stroke-linecap="round"/></svg>
<div class="b" style="left:1030.40px;top:95.80px;width:0.70px;height:585.60px;background:#e4e4e4;"></div>
<div class="b" style="left:1030.40px;top:95.80px;width:9.60px;height:77.00px;background:rgba(100,100,100,0.42);"></div>
<div class="b" style="left:1030.40px;top:95.80px;width:9.60px;height:1.60px;background:rgba(60,60,60,0.5);"></div>
<div class="b" style="left:1036.40px;top:156.30px;width:3.60px;height:3.60px;background:#b9800f;"></div>
<div class="b" style="left:1036.40px;top:180.60px;width:3.60px;height:3.60px;background:#b9800f;"></div>
<div class="b" style="left:1036.40px;top:196.70px;width:3.60px;height:3.60px;background:#b9800f;"></div>
<div class="b" style="left:1036.40px;top:213.80px;width:3.60px;height:3.60px;background:#b9800f;"></div>
<div class="b" style="left:1036.40px;top:240.20px;width:3.60px;height:3.60px;background:#b9800f;"></div>
<div class="b" style="left:1036.40px;top:256.50px;width:3.60px;height:3.60px;background:#b9800f;"></div>
<div class="b" style="left:1036.40px;top:275.10px;width:3.60px;height:3.60px;background:#b9800f;"></div>
<div class="b" style="left:1036.40px;top:310.90px;width:3.60px;height:3.60px;background:#b9800f;"></div>
<div class="b" style="left:1036.40px;top:343.30px;width:3.60px;height:3.60px;background:#b9800f;"></div>
<div class="b" style="left:1036.40px;top:392.60px;width:3.60px;height:3.60px;background:#b9800f;"></div>
<div class="b" style="left:1036.40px;top:412.90px;width:3.60px;height:3.60px;background:#b9800f;"></div>
<div class="b" style="left:1036.40px;top:440.10px;width:3.60px;height:3.60px;background:#b9800f;"></div>
<div class="b" style="left:1036.40px;top:463.90px;width:3.60px;height:3.60px;background:#b9800f;"></div>
<div class="b" style="left:1036.40px;top:496.30px;width:3.60px;height:3.60px;background:#b9800f;"></div>
<div class="b" style="left:1036.40px;top:528.70px;width:3.60px;height:3.60px;background:#b9800f;"></div>
<div class="b" style="left:1036.40px;top:541.90px;width:3.60px;height:3.60px;background:#b9800f;"></div>
<div class="b" style="left:40.00px;top:681.75px;width:24.10px;height:16.00px;background:#412d63;"></div>
<svg class="b" style="left:46.30px;top:684.50px;" width="12" height="10" viewBox="0 0 12 10"><path d="M3.300 2.600L5.600 4.900 3.300 7.200M8.900 3.900L6.600 6.200l2.300 2.300" fill="none" stroke="#cfc3e4" stroke-width="0.9" stroke-linecap="round" stroke-linejoin="round" transform="rotate(-12 6 5)"/></svg>
<div class="b" style="left:64.10px;top:681.75px;width:76.50px;height:16.00px;background:#66460a;"></div>
<svg class="b" style="left:70.60px;top:684.40px;" width="11" height="11" viewBox="0 0 11 11"><circle cx="5.500" cy="5.500" r="4.600" fill="none" stroke="#ffffff" stroke-width="0.85"/><path d="M7.600 3.400L6.300 6.300 3.400 7.600 4.700 4.700z" fill="#ffffff"/></svg>
<div class="t" style="top:682.90px;font-size:8.7px;color:#ffffff;letter-spacing:0.052px;left:84.20px;">Quest Mode</div>
<svg class="b" style="left:145.50px;top:684.40px;" width="11" height="11" viewBox="0 0 11 11"><g fill="none" stroke="#ffffff" stroke-width="0.85" stroke-linecap="round" stroke-linejoin="round"><circle cx="3.300" cy="2.500" r="1.200"/><circle cx="3.300" cy="8.700" r="1.200"/><circle cx="7.800" cy="3.900" r="1.200"/><path d="M3.300 3.700v3.800M7.800 5.100c0 1.800-2.500 1.500-4.300 2.700"/></g></svg>
<div class="t" style="top:682.90px;font-size:8.7px;color:#ffffff;letter-spacing:-0.015px;left:158.30px;">main</div>
<svg class="b" style="left:181.80px;top:684.40px;" width="11" height="11" viewBox="0 0 11 11"><g fill="none" stroke="#ffffff" stroke-width="0.85" stroke-linecap="round" stroke-linejoin="round"><path d="M9.300 4.700A4 4 0 0 0 2 4.300M1.700 6.300A4 4 0 0 0 9 6.700"/><path d="M2.200 2.300v2.100h2.100M8.800 8.700V6.600H6.700"/></g></svg>
<svg class="b" style="left:202.50px;top:684.40px;" width="11" height="11" viewBox="0 0 11 11"><g fill="none" stroke="#ffffff" stroke-width="0.8" stroke-linecap="round" stroke-linejoin="round"><circle cx="3" cy="2.600" r="1.100"/><circle cx="3" cy="8.600" r="1.100"/><path d="M3 3.700v3.800M6 1.400l2.200 1v6.400l-2.200 1zM8.200 4.400l1.800-1.200M8.200 6.400l1.800 1.200"/></g></svg>
<svg class="b" style="left:223.50px;top:684.40px;" width="11" height="11" viewBox="0 0 11 11"><g fill="none" stroke="#ffffff" stroke-width="0.75" stroke-linecap="round" stroke-linejoin="round"><path d="M8.800 1.300c-2.600.1-4.300 1.700-5.300 4.100l2.200 2.200c2.400-1 4-2.700 4.100-5.300.1-.7-.3-1.100-1-1zM3.700 5.200l-2 .3 1.200-1.700 1.700-.2M5.900 7.400l-.3 2 1.700-1.200.2-1.700M2.500 7.400c-.8.300-1.200 1.200-1.200 2.400 1.200 0 2.100-.4 2.400-1.200"/><circle cx="7.300" cy="3.800" r="0.700"/></g></svg>
<svg class="b" style="left:234.00px;top:684.40px;" width="11" height="11" viewBox="0 0 11 11"><g fill="none" stroke="#ffffff" stroke-width="0.8" stroke-linecap="round" stroke-linejoin="round"><path d="M4.500 6.500L6.500 4.500M5 3.600l1.200-1.200c.9-.9 2.100-.9 2.900-.1s.8 2-.1 2.900L7.800 6.400M6 7.400L4.800 8.600c-.9.900-2.100.9-2.900.1s-.8-2 .1-2.900L3.200 4.600"/></g></svg>
<div class="t" style="top:682.90px;font-size:8.7px;color:#ffffff;letter-spacing:0.050px;left:247.80px;">Launchpad</div>
<svg class="b" style="left:303.00px;top:684.40px;" width="11" height="11" viewBox="0 0 11 11"><g fill="none" stroke="#ffffff" stroke-width="0.8" stroke-linecap="round" stroke-linejoin="round"><circle cx="5.500" cy="5.500" r="4.200"/><path d="M3.900 3.900l3.200 3.200M7.100 3.900L3.900 7.100"/></g></svg>
<div class="t" style="top:682.90px;font-size:8.7px;color:#ffffff;left:316.50px;">0</div>
<svg class="b" style="left:322.80px;top:684.40px;" width="11" height="11" viewBox="0 0 11 11"><g fill="none" stroke="#ffffff" stroke-width="0.8" stroke-linecap="round" stroke-linejoin="round"><path d="M5.500 1.600L10 9.300H1z"/><path d="M5.500 4.300v2.600M5.500 7.900v.2"/></g></svg>
<div class="t" style="top:682.90px;font-size:8.7px;color:#ffffff;letter-spacing:0.228px;left:336.10px;">48</div>
<svg class="b" style="left:505.00px;top:684.40px;" width="11" height="11" viewBox="0 0 11 11"><g fill="none" stroke="#ffffff" stroke-width="0.9" stroke-linecap="round" stroke-linejoin="round"><circle cx="5.500" cy="5.500" r="2.100"/><path d="M5.500 1v2.400M5.500 7.600V10"/></g></svg>
<div class="t" style="top:682.90px;font-size:8.7px;color:#ffffff;letter-spacing:0.120px;left:517.10px;">Keith Lazuka, 2 months ago</div>
<div class="t" style="top:682.90px;font-size:8.7px;color:#ffffff;letter-spacing:0.037px;left:640.50px;">Ln 1, Col 1</div>
<div class="t" style="top:682.90px;font-size:8.7px;color:#ffffff;letter-spacing:0.032px;left:695.60px;">Spaces: 4</div>
<div class="t" style="top:682.90px;font-size:8.7px;color:#ffffff;letter-spacing:0.094px;left:747.20px;">UTF-8</div>
<div class="t" style="top:682.90px;font-size:8.7px;color:#ffffff;letter-spacing:-1.441px;left:784.80px;">LF</div>
<div class="t" style="top:682.90px;font-size:8.7px;color:#ffffff;letter-spacing:0.600px;left:806.60px;">{}</div>
<div class="b" style="left:812.20px;top:690.50px;width:2.60px;height:2.60px;background:none;border:0.7px solid #fff;border-radius:50%;box-sizing:border-box;"></div>
<div class="t" style="top:682.90px;font-size:8.7px;color:#ffffff;letter-spacing:0.146px;left:820.40px;">Markdown</div>
<svg class="b" style="left:873.50px;top:684.40px;" width="11" height="11" viewBox="0 0 11 11"><g fill="none" stroke="#9c88bd" stroke-width="0.8" stroke-linecap="round" stroke-linejoin="round"><path d="M1.500 5.500h5M4.700 3.500l2 2-2 2M8.600 2.200v6.600"/></g></svg>
<div class="t" style="top:682.90px;font-size:8.7px;color:#9c88bd;letter-spacing:-0.088px;left:885.60px;">NES</div>
<svg class="b" style="left:913.80px;top:684.40px;" width="11" height="11" viewBox="0 0 11 11"><g fill="none" stroke="#ffffff" stroke-width="0.85" stroke-linecap="round" stroke-linejoin="round"><circle cx="5.500" cy="5.500" r="4.300"/><path d="M5.500 6L7.300 3.600"/><path d="M2.800 6.800A2.900 2.900 0 0 1 8.200 6.800"/></g></svg>
<div class="t" style="top:682.90px;font-size:8.7px;color:#ffffff;letter-spacing:-0.106px;left:928.10px;">Usage</div>
<svg class="b" style="left:962.50px;top:684.40px;" width="12" height="11" viewBox="0 0 12 11"><g fill="none" stroke="#cfc3e4" stroke-width="0.75" stroke-linecap="round" stroke-linejoin="round"><path d="M1.500 6l1.800 2.200L7.800 2.500M5.500 7.300l.8.900L10.800 2.500"/></g></svg>
<div class="t" style="top:682.90px;font-size:8.7px;color:#ffffff;letter-spacing:0.112px;left:977.50px;">Prettier</div>
<svg class="b" style="left:1018.80px;top:684.40px;" width="11" height="11" viewBox="0 0 11 11"><g fill="none" stroke="#ffffff" stroke-width="0.8" stroke-linecap="round" stroke-linejoin="round"><path d="M2.300 8.200h6.400c-.9-.9-.9-1.500-.9-3.400 0-1.600-1-2.600-2.300-2.600s-2.300 1-2.300 2.600c0 1.900 0 2.500-.9 3.400zM4.600 9.400c.4.500 1.400.5 1.800 0"/></g></svg>
<svg class="b" style="left:921.00px;top:32.90px;" width="12" height="12" viewBox="0 0 12 12"><g fill="none" stroke="#6a3fa6" stroke-width="0.95" stroke-linejoin="round" stroke-linecap="round"><rect x="1.600" y="4" width="8.800" height="2.200"/><path d="M2.400 6.200v4.400h7.200V6.200M6 4v6.600"/><path d="M6 4C4.800 1.400 2.600 1.800 3 3.100c.2.700 1.400.9 3 .9zM6 4c1.200-2.600 3.400-2.200 3 -.9-.2.700-1.400.9-3 .9z"/></g></svg>
<div class="b" style="left:937.50px;top:33.60px;width:0.70px;height:10.60px;background:#a592bf;"></div>
<svg class="b" style="left:943.40px;top:32.90px;" width="12" height="12" viewBox="0 0 12 12"><g fill="none" stroke="#3a3048" stroke-width="0.95" stroke-linejoin="round"><rect x="1.400" y="1.600" width="3.800" height="8.800" rx="0.600"/><rect x="7.400" y="1.600" width="3" height="2.800" rx="0.500"/><rect x="7.400" y="7.600" width="3" height="2.800" rx="0.500"/></g></svg>
<svg class="b" style="left:961.80px;top:32.90px;" width="12" height="12" viewBox="0 0 12 12"><rect x="1.200" y="1.600" width="9.600" height="8.800" rx="0.800" fill="none" stroke="#3a3048" stroke-width="0.95"/><rect x="1.200" y="1.600" width="4.600" height="8.800" fill="#3a3048"/></svg>
<svg class="b" style="left:980.20px;top:32.90px;" width="12" height="12" viewBox="0 0 12 12"><g fill="none" stroke="#3a3048" stroke-width="0.95" stroke-linejoin="round"><rect x="1.200" y="1.600" width="9.600" height="8.800" rx="0.800"/><path d="M1.200 7.200h9.600"/></g></svg>
<svg class="b" style="left:998.50px;top:32.90px;" width="12" height="12" viewBox="0 0 12 12"><g fill="none" stroke="#3a3048" stroke-width="0.95" stroke-linejoin="round"><rect x="1.200" y="1.600" width="9.600" height="8.800" rx="0.800"/><path d="M6.800 1.600v8.800"/></g></svg>
<svg class="b" style="left:1016.80px;top:32.40px;" width="13" height="13" viewBox="0 0 13 13"><g fill="none" stroke="#3a3048" stroke-width="0.95"><circle cx="6.500" cy="6.500" r="5.400"/><circle cx="6.500" cy="5.200" r="2.100"/><path d="M2.900 10.400c.6-1.800 2-2.600 3.600-2.600s3 .8 3.600 2.600"/></g></svg>
</div>
</body></html>
